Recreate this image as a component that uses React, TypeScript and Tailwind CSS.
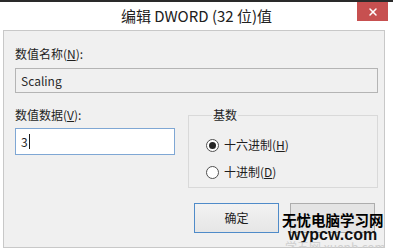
import { X } from "lucide-react";

const ui = { fontFamily: '"Noto Sans CJK SC", "Noto Sans", sans-serif' };

function Radio({ checked, label, hot }: { checked: boolean; label: string; hot: string }) {
  const [before, after] = label.split(hot);
  return (
    <div className="flex items-center gap-[5px] h-[16px]">
      <span className="flex h-[13px] w-[13px] items-center justify-center rounded-full border border-[#505050] bg-white">
        {checked ? <span className="h-[7px] w-[7px] rounded-full bg-[#252525]" /> : null}
      </span>
      <span className="text-[12px] leading-[16px] text-[#1e1e1e]">
        {before}
        <span className="underline">{hot}</span>
        {after}
      </span>
    </div>
  );
}

export default function App() {
  return (
    <div className="relative flex h-[248px] w-[393px] flex-col overflow-hidden border-t-2 border-[#2a2a2a] bg-white" style={ui}>
      {/* title bar */}
      <div className="relative flex h-[28px] items-center justify-center">
        <span className="text-[15px] leading-[20px] text-[#202020]">编辑 DWORD (32 位)值</span>
        <button className="absolute right-[5px] top-0 flex h-[19px] w-[31px] items-center justify-center bg-[#c75050] text-white">
          <X className="h-[12px] w-[12px]" strokeWidth={3} />
        </button>
      </div>

      {/* client area */}
      <div className="ml-[3px] mr-[8px] flex-1 border border-[#c8c8c8] bg-[#f0f0f0] pl-[11px] pr-[6px] pt-[15px]">
        <div className="text-[12px] leading-[16px] text-[#1e1e1e]">
          数值名称(<span className="underline">N</span>):
        </div>
        <div className="mt-[6px] flex h-[25px] items-center border border-[#b4b4b4] bg-[#f0f0f0] px-[5px] text-[12px] text-[#2a2a2a]">
          Scaling
        </div>

        <div className="mt-[14px] flex gap-[13px]">
          <div className="w-[160px]">
            <div className="text-[12px] leading-[16px] text-[#1e1e1e]">
              数值数据(<span className="underline">V</span>):
            </div>
            <div className="mt-[5px] flex h-[27px] items-center border border-[#7fa7d4] bg-white px-[5px] text-[12px] text-[#1e1e1e]">
              3<span className="ml-[1px] h-[15px] w-px bg-[#1e1e1e]" />
            </div>
          </div>
          <fieldset className="h-[81px] w-[190px] border border-[#d9d9d9] pl-[17px]">
            <legend className="ml-[6px] px-[1px] text-[12px] leading-[16px] text-[#1e1e1e]">基数</legend>
            <div className="mt-[14px] flex flex-col gap-[11px]">
              <Radio checked label="十六进制(H)" hot="H" />
              <Radio checked={false} label="十进制(D)" hot="D" />
            </div>
          </fieldset>
        </div>

        <div className="mt-[15px] flex justify-end gap-[11px] pr-[3px]">
          <button className="h-[30px] w-[85px] border border-[#4f8bc9] bg-gradient-to-b from-[#f2f2f2] to-[#e6e6e6] text-[12px] text-[#1e1e1e]">
            确定
          </button>
          <button className="h-[30px] w-[85px] border border-[#adadad] bg-[#e4e4e4]" />
        </div>
      </div>

      {/* watermark */}
      <div className="absolute left-[282px] top-[210px] flex w-[108px] flex-col items-start leading-none">
        <span className="text-[14.5px] font-bold leading-[16px] text-black">无忧电脑学习网</span>
        <span className="ml-[6px] text-[16px] font-bold leading-[13px] text-[#111]" style={{ fontFamily: '"Liberation Sans", sans-serif' }}>
          wypcw.com
        </span>
        <span className="ml-[3px] text-[12px] leading-[12px] text-[#cfcfcf]">学五网 xuenb.com</span>
      </div>
    </div>
  );
}
